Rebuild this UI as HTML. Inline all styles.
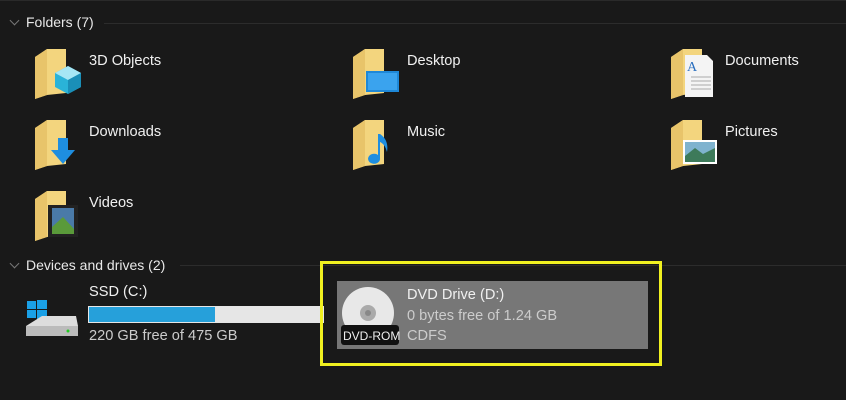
<!DOCTYPE html>
<html><head><style>
body{margin:0;width:846px;height:400px;background:#191919;font-family:"Liberation Sans",sans-serif;color:#fff;position:relative;overflow:hidden}
.a{position:absolute}
.h{font-size:14px;color:#e8e8e8}
.t{font-size:14.6px;color:#f0f0f0}
.line{height:1px;background:#2c2c2c}
.chev{width:6px;height:6px;border-right:1px solid #777;border-bottom:1px solid #777;transform:rotate(45deg)}
</style></head><body>
<div class="a" style="left:0;top:0;width:846px;height:1px;background:#2a2a2a"></div>
<div class="a chev" style="left:11px;top:17px"></div>
<div class="a h" style="left:26px;top:14px">Folders (7)</div>
<div class="a line" style="left:104px;top:23px;width:742px"></div>

<svg width="0" height="0" style="position:absolute"><defs>
<g id="f"><path d="M2 10 L14 2 L14 48 L2 52 Z" fill="#d9b65a"/><path d="M14 2 L33 2 L33 46 L14 48 Z" fill="#f3d57e"/><path d="M2 10 L14 2 L14 48 L2 52Z" fill="#e8c46a"/></g>
</defs></svg>

<svg class="a" style="left:33px;top:47px" width="50" height="56"><use href="#f"/><path d="M22 26 L35 19 L48 26 L48 40 L35 47 L22 40Z" fill="#2ab3d8"/><path d="M22 26 L35 33 L48 26 L35 19Z" fill="#a6e7f5"/><path d="M35 33 L35 47 L48 40 L48 26Z" fill="#1a8fb8"/></svg>
<div class="a t" style="left:89px;top:53px">3D Objects</div>
<svg class="a" style="left:351px;top:47px" width="50" height="56"><use href="#f"/><rect x="15" y="24" width="33" height="21" fill="#1e88d8"/><rect x="17" y="26" width="29" height="17" fill="#3aa3ee"/></svg>
<div class="a t" style="left:407px;top:53px">Desktop</div>
<svg class="a" style="left:669px;top:47px" width="50" height="56"><use href="#f"/><path d="M16 8 L38 8 L44 14 L44 50 L16 50Z" fill="#f4f4f4"/><path d="M22 30 L42 30 M22 34 L42 34 M22 38 L42 38 M22 42 L42 42" stroke="#aaa"/><text x="18" y="24" font-size="14" fill="#2a6fbf" font-family="Liberation Serif">A</text></svg>
<div class="a t" style="left:725px;top:53px">Documents</div>
<svg class="a" style="left:33px;top:118px" width="50" height="56"><use href="#f"/><path d="M25 20 L35 20 L35 32 L42 32 L30 46 L18 32 L25 32Z" fill="#1e8ee0"/></svg>
<div class="a t" style="left:89px;top:124px">Downloads</div>
<svg class="a" style="left:351px;top:118px" width="50" height="56"><use href="#f"/><path d="M27 16 L29 16 L29 40 A6 5 0 1 1 27 37Z" fill="#1e8ee0"/><path d="M29 16 Q38 22 36 34 Q34 26 29 24Z" fill="#1e8ee0"/></svg>
<div class="a t" style="left:407px;top:124px">Music</div>
<svg class="a" style="left:669px;top:118px" width="50" height="56"><use href="#f"/><rect x="14" y="22" width="34" height="24" fill="#fff"/><rect x="16" y="24" width="30" height="20" fill="#7fb3cf"/><path d="M16 38 L26 30 L34 36 L46 30 L46 44 L16 44Z" fill="#3d7a5a"/></svg>
<div class="a t" style="left:725px;top:124px">Pictures</div>
<svg class="a" style="left:33px;top:189px" width="50" height="56"><use href="#f"/><rect x="15" y="16" width="30" height="32" fill="#222"/><rect x="19" y="19" width="22" height="26" fill="#4a7aa8"/><path d="M19 38 L30 28 L41 40 L41 45 L19 45Z" fill="#5a9a3a"/></svg>
<div class="a t" style="left:89px;top:195px">Videos</div>

<div class="a chev" style="left:11px;top:260px"></div>
<div class="a h" style="left:26px;top:257px">Devices and drives (2)</div>
<div class="a line" style="left:180px;top:265px;width:666px"></div>

<svg class="a" style="left:24px;top:298px" width="56" height="42"><rect x="3" y="3" width="9" height="8" fill="#1aa0e6"/><rect x="13" y="2" width="10" height="9" fill="#1aa0e6"/><rect x="3" y="12" width="9" height="8" fill="#1aa0e6"/><rect x="13" y="12" width="10" height="9" fill="#1aa0e6"/><path d="M2 28 L18 18 L52 18 L54 28 L54 38 L2 38Z" fill="#ddd"/><rect x="2" y="28" width="52" height="10" fill="#bbb"/><circle cx="44" cy="33" r="1.5" fill="#2c2"/></svg>
<div class="a t" style="left:89px;top:284px">SSD (C:)</div>
<div class="a" style="left:88px;top:306px;width:236px;height:17px;background:#e6e6e6"></div>
<div class="a" style="left:89px;top:307px;width:126px;height:15px;background:#26a0da"></div>
<div class="a t" style="left:89px;top:328px;color:#ccc">220 GB free of 475 GB</div>

<div class="a" style="left:320px;top:261px;width:336px;height:99px;border:3px solid #f0f020"></div>
<div class="a" style="left:337px;top:281px;width:311px;height:68px;background:#777"></div>
<svg class="a" style="left:340px;top:287px" width="62" height="60"><circle cx="28" cy="26" r="26" fill="#e8e8e8"/><circle cx="28" cy="26" r="8" fill="#aaa"/><circle cx="28" cy="26" r="3" fill="#888"/><rect x="1" y="38" width="58" height="20" rx="3" fill="#111"/></svg>
<div class="a" style="left:343px;top:329px;font-size:12px;color:#eee">DVD-ROM</div>
<div class="a t" style="left:407px;top:287px">DVD Drive (D:)</div>
<div class="a t" style="left:407px;top:308px;color:#ccc">0 bytes free of 1.24 GB</div>
<div class="a t" style="left:407px;top:328px;color:#ccc">CDFS</div>
</body></html>
